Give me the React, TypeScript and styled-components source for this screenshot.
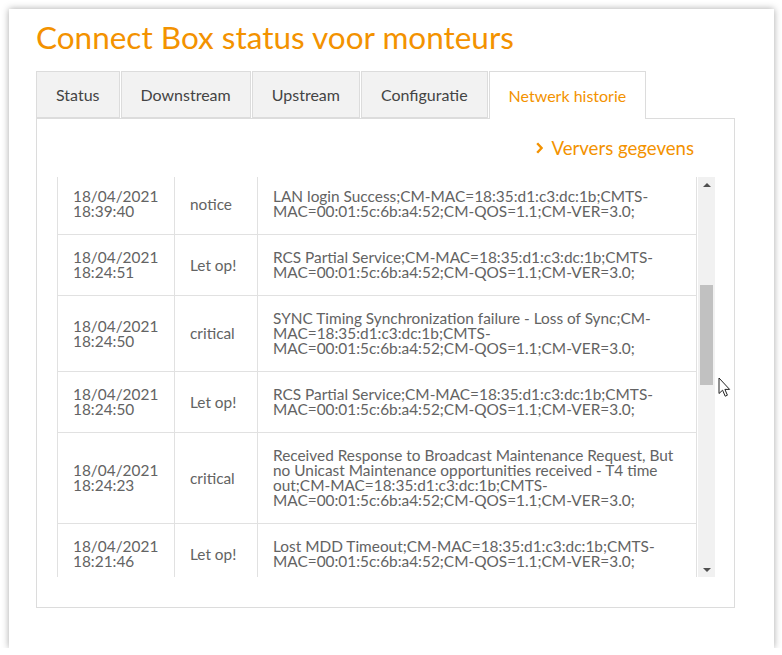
import React, { useLayoutEffect, useRef, useState } from "react"
import styled, { createGlobalStyle } from "styled-components"

const ORANGE = "#f39200"
const LINE = "#e1e1e1"
const TEXT = "#636363"
const MAC = ";CM-MAC=18:35:d1:c3:dc:1b;CMTS-MAC=00:01:5c:6b:a4:52;CM-QOS=1.1;CM-VER=3.0;"

type LogEntry = { date: string; time: string; level: string; message: string }

// entries above the visible part of the list (newer)
const newer: LogEntry[] = [
  { date: "18/04/2021", time: "19:12:05", level: "notice", message: "LAN login Success" + MAC },
  { date: "18/04/2021", time: "19:02:31", level: "Let op!", message: "RCS Partial Service" + MAC },
  { date: "18/04/2021", time: "18:58:17", level: "notice", message: "LAN login Success" + MAC },
  { date: "18/04/2021", time: "18:51:44", level: "Let op!", message: "Lost MDD Timeout" + MAC },
  { date: "18/04/2021", time: "18:47:09", level: "Let op!", message: "RCS Partial Service" + MAC },
  { date: "18/04/2021", time: "18:41:52", level: "notice", message: "LAN login Success" + MAC },
]

const shown: LogEntry[] = [
  { date: "18/04/2021", time: "18:39:40", level: "notice", message: "LAN login Success" + MAC },
  { date: "18/04/2021", time: "18:24:51", level: "Let op!", message: "RCS Partial Service" + MAC },
  {
    date: "18/04/2021",
    time: "18:24:50",
    level: "critical",
    message: "SYNC Timing Synchronization failure - Loss of Sync" + MAC,
  },
  { date: "18/04/2021", time: "18:24:50", level: "Let op!", message: "RCS Partial Service" + MAC },
  {
    date: "18/04/2021",
    time: "18:24:23",
    level: "critical",
    message:
      "Received Response to Broadcast Maintenance Request, But no Unicast Maintenance opportunities received - T4 time out" +
      MAC,
  },
  { date: "18/04/2021", time: "18:21:46", level: "Let op!", message: "Lost MDD Timeout" + MAC },
]

// older entries below the visible part
const older: LogEntry[] = [
  { date: "18/04/2021", time: "18:21:40", level: "Let op!", message: "RCS Partial Service" + MAC },
  { date: "18/04/2021", time: "18:20:12", level: "notice", message: "LAN login Success" + MAC },
  { date: "18/04/2021", time: "18:11:38", level: "Let op!", message: "Lost MDD Timeout" + MAC },
  { date: "18/04/2021", time: "18:09:27", level: "Let op!", message: "RCS Partial Service" + MAC },
  {
    date: "18/04/2021",
    time: "18:09:20",
    level: "critical",
    message:
      "Received Response to Broadcast Maintenance Request, But no Unicast Maintenance opportunities received - T4 time out" +
      MAC,
  },
  { date: "18/04/2021", time: "17:55:03", level: "notice", message: "LAN login Success" + MAC },
  { date: "18/04/2021", time: "17:42:16", level: "Let op!", message: "RCS Partial Service" + MAC },
  { date: "18/04/2021", time: "17:30:59", level: "notice", message: "LAN login Success" + MAC },
  { date: "18/04/2021", time: "17:28:44", level: "Let op!", message: "Lost MDD Timeout" + MAC },
  { date: "18/04/2021", time: "17:14:02", level: "notice", message: "LAN login Success" + MAC },
  { date: "18/04/2021", time: "17:02:37", level: "Let op!", message: "RCS Partial Service" + MAC },
]

const tabs = ["Status", "Downstream", "Upstream", "Configuratie", "Netwerk historie"]

const GlobalStyle = createGlobalStyle`
  body {
    margin: 0;
    background: #fff;
    font-family: Lato, "Open Sans", "Liberation Sans", sans-serif;
  }
`

const Window = styled.div`
  box-sizing: border-box;
  width: 765px;
  height: 639px;
  margin: 9px 0 0 9px;
  padding: 6px 39px 0 27px;
  background: #fff;
  box-shadow: 0 0 7px rgba(0, 0, 0, 0.35);
  position: relative;
`

const Title = styled.h1`
  margin: 0 0 11px;
  color: ${ORANGE};
  font-size: 31.5px;
  font-weight: 400;
  line-height: 45px;
`

const TabBar = styled.div`
  display: flex;
  gap: 1px;
  height: 47px;
  position: relative;
  z-index: 1;
`

const Tab = styled.div<{ $active?: boolean }>`
  box-sizing: border-box;
  display: flex;
  align-items: center;
  padding: 0 19px;
  height: ${(p) => (p.$active ? "48px" : "47px")};
  border: 1px solid #dcdcdc;
  border-bottom: ${(p) => (p.$active ? "none" : "1px solid #dcdcdc")};
  background: ${(p) => (p.$active ? "#fff" : "#f2f2f2")};
  color: ${(p) => (p.$active ? ORANGE : "#444")};
  font-size: 16px;
`

const Panel = styled.div`
  box-sizing: border-box;
  width: 699px;
  height: 490px;
  border: 1px solid #dcdcdc;
  padding: 19px 19px 0 20px;
`

const RefreshRow = styled.div`
  display: flex;
  justify-content: flex-end;
  padding-right: 21px;
  height: 20px;
  margin-bottom: 19px;
`

const RefreshLink = styled.a`
  display: flex;
  align-items: center;
  gap: 8px;
  color: ${ORANGE};
  font-size: 18.6px;
  line-height: 20px;
  text-decoration: none;
  cursor: pointer;
`

const ScrollFrame = styled.div`
  display: flex;
  height: 400px;
`

const ScrollArea = styled.div`
  flex: 1;
  overflow: hidden;
`

const ScrollBar = styled.div`
  width: 17px;
  display: flex;
  flex-direction: column;
  background: #f1f1f1;
`

const ArrowButton = styled.div<{ $down?: boolean }>`
  height: 15px;
  display: flex;
  align-items: center;
  justify-content: center;

  &::after {
    content: "";
    border-left: 4px solid transparent;
    border-right: 4px solid transparent;
    ${(p) => (p.$down ? "border-top: 4px solid #505050;" : "border-bottom: 4px solid #505050;")}
  }
`

const Track = styled.div`
  flex: 1;
  position: relative;
`

const Thumb = styled.div`
  position: absolute;
  left: 2px;
  right: 2px;
  background: #c1c1c1;
`

const LogTable = styled.table`
  width: 640px;
  border-collapse: collapse;
  table-layout: fixed;
  color: ${TEXT};
  font-size: 15.4px;
  line-height: 15px;
`

const Cell = styled.td<{ $width?: number }>`
  box-sizing: border-box;
  width: ${(p) => (p.$width ? `${p.$width}px` : "auto")};
  border: 1px solid ${LINE};
  padding: 15px 15px 15px 15px;
  vertical-align: middle;
`

const Cursor = styled.svg`
  position: absolute;
  left: 709px;
  top: 368px;
`

const Chevron = () => (
  <svg width="7" height="12" viewBox="0 0 7 12">
    <path d="M1.2 1.2 L5.6 6 L1.2 10.8" fill="none" stroke={ORANGE} strokeWidth="2.4" />
  </svg>
)

const Row = ({ entry, rowRef }: { entry: LogEntry; rowRef?: React.Ref<HTMLTableRowElement> }) => (
  <tr ref={rowRef}>
    <Cell $width={117}>
      {entry.date}
      <br />
      {entry.time}
    </Cell>
    <Cell $width={83}>{entry.level}</Cell>
    <Cell>{entry.message}</Cell>
  </tr>
)

const App = () => {
  const scrollRef = useRef<HTMLDivElement>(null)
  const firstShown = useRef<HTMLTableRowElement>(null)
  const [thumb, setThumb] = useState({ top: 0, height: 0 })

  // the list in the screenshot is scrolled down a little past the first entry
  useLayoutEffect(() => {
    const area = scrollRef.current
    if (!area || !firstShown.current) return
    area.scrollTop = firstShown.current.offsetTop + 4
    const track = area.clientHeight - 30
    const height = Math.round((area.clientHeight / area.scrollHeight) * track)
    const top = Math.round(
      (area.scrollTop / (area.scrollHeight - area.clientHeight)) * (track - height)
    )
    setThumb({ top, height })
  }, [])

  return (
    <>
      <GlobalStyle />
      <Window>
        <Title>Connect Box status voor monteurs</Title>
        <TabBar>
          {tabs.map((t) => (
            <Tab key={t} $active={t === "Netwerk historie"}>
              {t}
            </Tab>
          ))}
        </TabBar>
        <Panel>
          <RefreshRow>
            <RefreshLink>
              <Chevron />
              Ververs gegevens
            </RefreshLink>
          </RefreshRow>
          <ScrollFrame>
            <ScrollArea ref={scrollRef}>
              <LogTable>
                <tbody>
                  {newer.map((e) => (
                    <Row key={e.time} entry={e} />
                  ))}
                  {shown.map((e, i) => (
                    <Row key={e.time + i} entry={e} rowRef={i === 0 ? firstShown : undefined} />
                  ))}
                  {older.map((e) => (
                    <Row key={e.time} entry={e} />
                  ))}
                </tbody>
              </LogTable>
            </ScrollArea>
            <ScrollBar>
              <ArrowButton />
              <Track>
                <Thumb style={{ top: thumb.top, height: thumb.height }} />
              </Track>
              <ArrowButton $down />
            </ScrollBar>
          </ScrollFrame>
        </Panel>
        <Cursor width="13" height="21" viewBox="0 0 13 21">
          <path
            d="M1 1 L1 16.5 L4.6 13.2 L7.2 19.2 L9.4 18.2 L6.9 12.4 L11.6 12.4 Z"
            fill="#fff"
            stroke="#222"
            strokeWidth="1"
            strokeLinejoin="round"
          />
        </Cursor>
      </Window>
    </>
  )
}

export default App
